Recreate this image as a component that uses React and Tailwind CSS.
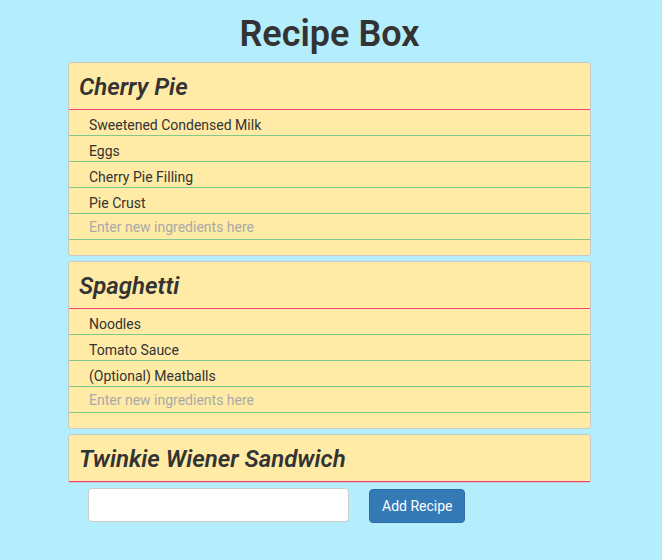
import React from 'react'

const recipes = [
  { id: 1, name: "Cherry Pie", ingredients: ["Sweetened Condensed Milk", "Eggs", "Cherry Pie Filling", "Pie Crust"], open: true },
  { id: 2, name: "Spaghetti", ingredients: ["Noodles", "Tomato Sauce", "(Optional) Meatballs"], open: true },
  { id: 3, name: "Twinkie Wiener Sandwich", ingredients: [], open: false },
];

const Recipe = ({ recipe }) => (
  <div className="mb-[5px] bg-[#ffeba6] border border-[#c9c9c9] rounded-[3px]">
    {/* Heading */}
    <div className="h-[47px] flex items-center px-[10px] pt-[2px] border-b border-[#f2407c]">
      <h3 className="text-[24px] italic font-semibold text-[#333]">{recipe.name}</h3>
    </div>

    {recipe.open && (
      <div className="pb-[15px]">
        <ul>
          {recipe.ingredients.map((item) => (
            <li key={item} className="h-[26px] pl-[20px] pt-[5px] border-b border-[#80c88c] text-[14px] leading-[20px] text-[#333]">
              {item}
            </li>
          ))}
        </ul>
        <div className="h-[26px] border-b border-[#80c88c]">
          <input
            type="text"
            placeholder="Enter new ingredients here"
            className="w-full h-[25px] pl-[20px] pt-[1px] bg-transparent text-[14px] text-[#333] placeholder:text-[#a9a9a9] outline-none"
          />
        </div>
      </div>
    )}
  </div>
);

export default function App() {
  return (
    <div className="min-h-[560px] bg-[#b4edfb] pt-[14px]" style={{ fontFamily: "Roboto, 'Liberation Sans', sans-serif" }}>
      <div className="ml-[68px] w-[523px]">
        <h1 className="text-center text-[36px] leading-[40px] font-semibold text-[#333] mb-[8px]">Recipe Box</h1>
        {recipes.map((r) => (
          <Recipe key={r.id} recipe={r} />
        ))}
        {/* Add recipe form */}
        <div className="flex items-start gap-[20px] pl-[20px]">
          <input
            type="text"
            className="w-[261px] h-[34px] bg-white border border-[#ccc] rounded-[4px] px-3 text-sm outline-none"
          />
          <button className="h-[34px] px-[12px] mt-[1px] bg-[#337ab7] border border-[#2e6da4] rounded-[4px] text-white text-[14px]">
            Add Recipe
          </button>
        </div>
      </div>
    </div>
  );
}
